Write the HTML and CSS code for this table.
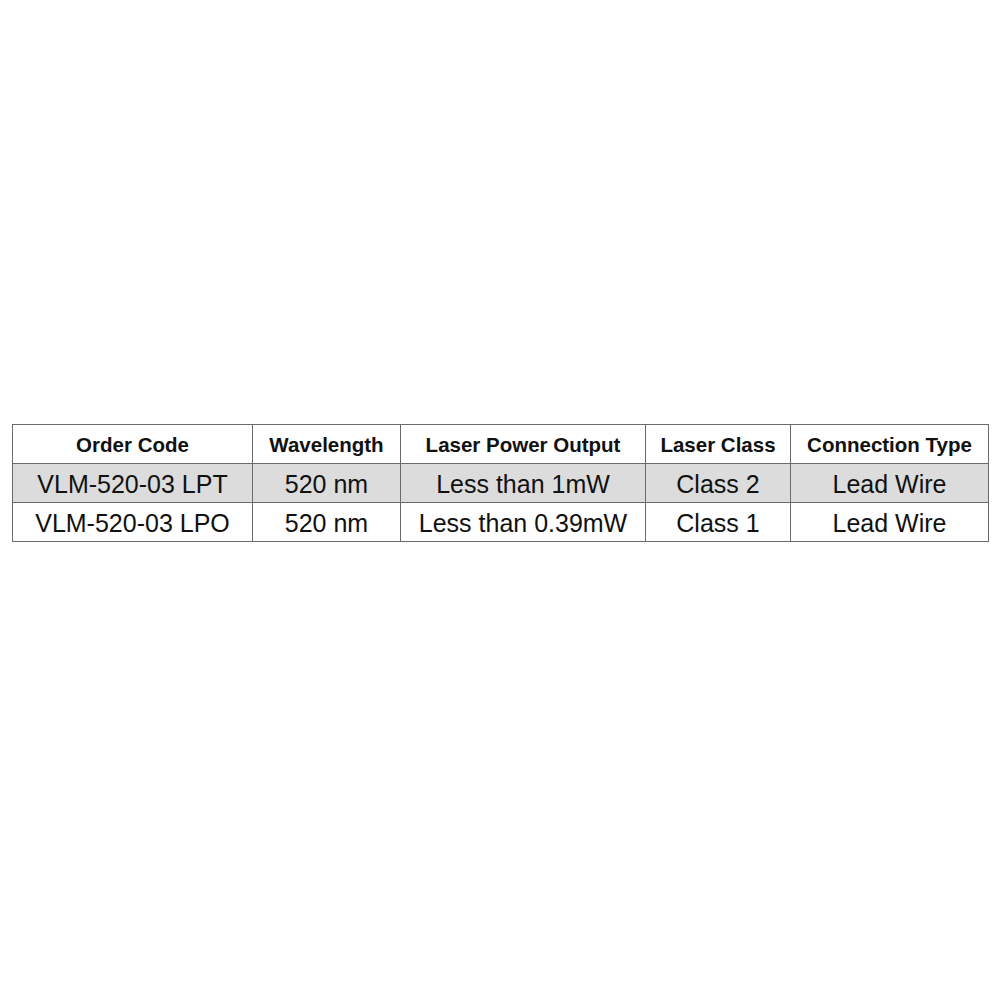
FILE: index.html
```html
<!DOCTYPE html>
<html>
<head>
<meta charset="utf-8">
<link rel="stylesheet" href="styles.css">
</head>
<body>
<table class="spec">
  <colgroup>
    <col class="c1"><col class="c2"><col class="c3"><col class="c4"><col class="c5">
  </colgroup>
  <thead>
    <tr>
      <th>Order Code</th>
      <th>Wavelength</th>
      <th>Laser Power Output</th>
      <th>Laser Class</th>
      <th>Connection Type</th>
    </tr>
  </thead>
  <tbody>
    <tr class="shade">
      <td>VLM-520-03 LPT</td>
      <td>520 nm</td>
      <td>Less than 1mW</td>
      <td>Class 2</td>
      <td>Lead Wire</td>
    </tr>
    <tr>
      <td>VLM-520-03 LPO</td>
      <td>520 nm</td>
      <td>Less than 0.39mW</td>
      <td>Class 1</td>
      <td>Lead Wire</td>
    </tr>
  </tbody>
</table>
</body>
</html>
```
FILE: styles.css
```css
html, body {
  margin: 0;
  background: #fff;
}
body {
  padding: 424px 0 0 12px;
  font-family: "Liberation Sans", Arial, sans-serif;
  color: #111;
}
.spec {
  border-collapse: collapse;
  table-layout: fixed;
  width: 976px;
  border: 1px solid #3a3a3a;
}
.c1 { width: 240px; }
.c2 { width: 148px; }
.c3 { width: 245px; }
.c4 { width: 145px; }
.c5 { width: 198px; }
.spec th, .spec td {
  border: 1px solid #6a6a6a;
  text-align: center;
  padding: 0;
  height: 39px;
  box-sizing: border-box;
  white-space: nowrap;
}
.spec th {
  font-size: 20.5px;
  font-weight: bold;
  padding-top: 1px;
}
.spec td {
  font-size: 25px;
  line-height: 1;
  padding-top: 2px;
}
.shade td {
  background: #dcdcdc;
}
```
